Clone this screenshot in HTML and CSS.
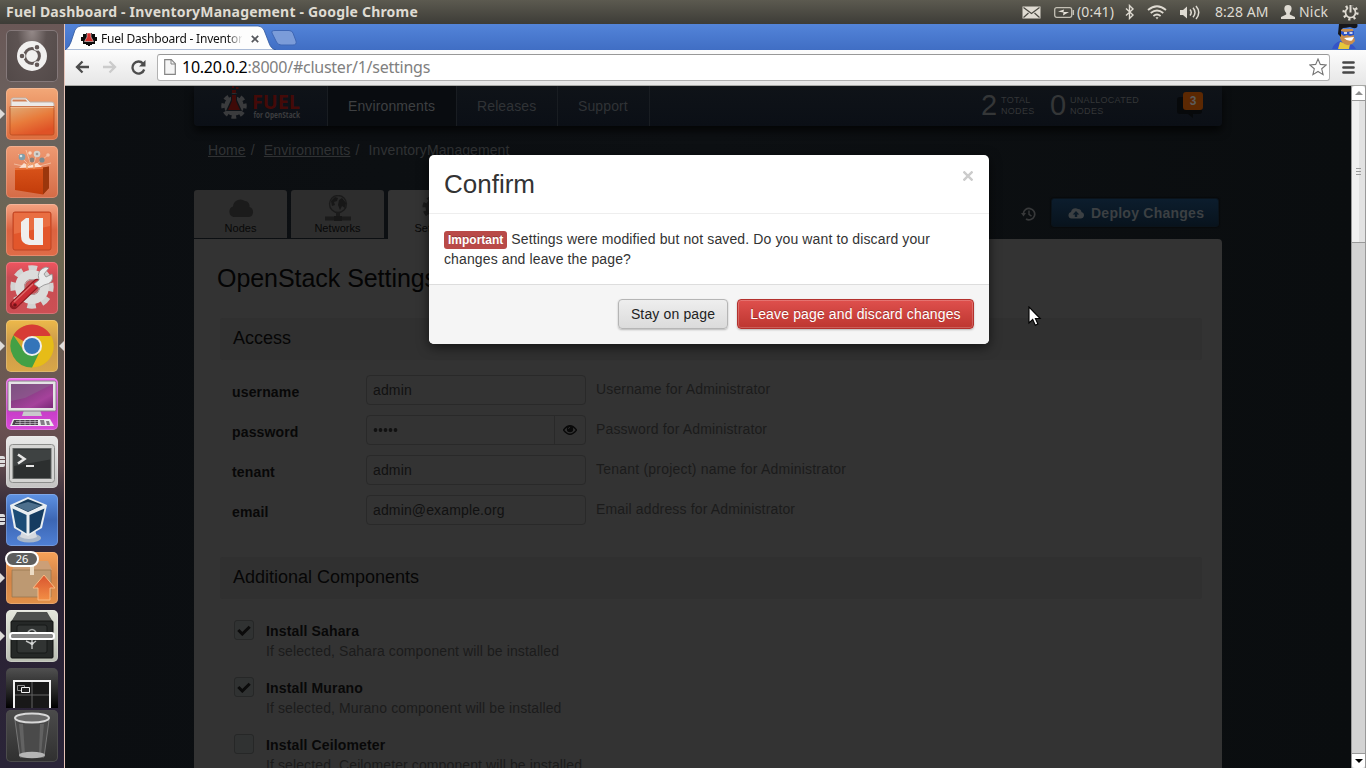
FILE: index.html
```html
<!DOCTYPE html>
<html lang="en">
<head>
<meta charset="utf-8">
<title>Fuel Dashboard - InventoryManagement</title>
<link rel="stylesheet" href="styles.css">
</head>
<body>
<header class="sysbar">
  <div class="sysbar-title">Fuel Dashboard - InventoryManagement - Google Chrome</div>
  <div class="sysbar-status">
    <svg class="s-mail" width="19" height="13" viewBox="0 0 19 13"><rect x="0.5" y="0.5" width="18" height="12" fill="#dfdbd2"/><path d="M1.5 1.5l8 6 8-6M1.5 11.5l5-4.5M17.500 11.500l-5-4.500" stroke="#4a4942" stroke-width="1.200" fill="none"/></svg>
    <svg class="s-batt" width="21" height="11" viewBox="0 0 21 11"><rect x="0.700" y="0.700" width="17" height="9.600" rx="2" fill="none" stroke="#c4c0b5" stroke-width="1.300"/><path d="M19.300 3v5" stroke="#c4c0b5" stroke-width="1.500"/><path d="M4 4.500l6-2-.5 2.500 5.500 0-6 3.500.5-3z" fill="#e6e2d9"/></svg>
    <span class="s-remain">(0:41)</span>
    <svg class="s-bt" width="10" height="16" viewBox="0 0 10 16"><path d="M1 4.500l7 6.500-3.500 3.500v-13L8 5 1 11.500" fill="none" stroke="#dfdbd2" stroke-width="1.400"/></svg>
    <svg class="s-wifi" width="20" height="15" viewBox="0 0 20 15" fill="none" stroke="#dfdbd2" stroke-width="1.700"><path d="M1 5q9-7.500 18 0M3.700 8q6.300-5 12.600 0M6.400 11q3.600-3 7.200 0"/><path d="M8.500 12.300h3L10 14.500z" fill="#dfdbd2" stroke="none"/></svg>
    <svg class="s-snd" width="20" height="15" viewBox="0 0 20 15" fill="none" stroke="#dfdbd2" stroke-width="1.500"><path d="M0 5h3l4-3.500v12L3 10H0z" fill="#dfdbd2" stroke="none"/><path d="M10 4.500q2.500 3 0 6M13 2.800q4 4.700 0 9.400M16 1q5.500 6.500 0 13"/></svg>
    <span class="s-clock">8:28 AM</span>
    <svg class="s-user" width="14" height="14" viewBox="0 0 14 14"><path d="M7 0c4.500 0 4.500 5 1.800 8v1.500L14 12v2H0v-2l5.200-2.500V8C2.500 5 2.500 0 7 0z" fill="#dfdbd2"/></svg>
    <span class="s-name">Nick</span>
    <svg class="s-gear" width="17" height="17" viewBox="0 0 17 17"><circle cx="8.500" cy="8.500" r="6.800" fill="none" stroke="#dfdbd2" stroke-width="2.600" stroke-dasharray="2.200 3.140"/><circle cx="8.500" cy="8.500" r="5" fill="none" stroke="#dfdbd2" stroke-width="1.700"/><path d="M8.500 0v8.500" stroke="#4e4d45" stroke-width="4.500"/><path d="M8.500 1v7.500" stroke="#dfdbd2" stroke-width="2"/></svg>
  </div>
</header>
<div class="desktop">
  <aside class="launcher">
    <div class="tile t-dash"><svg viewBox="0 0 52 52"><circle cx="26" cy="26" r="15" fill="#f1f0ef"/><circle cx="26" cy="26" r="7.400" fill="none" stroke="#625857" stroke-width="3"/><g fill="#625857" stroke="#f1f0ef" stroke-width="1.200"><circle cx="16" cy="26" r="2.900"/><circle cx="31" cy="17.300" r="2.900"/><circle cx="31" cy="34.700" r="2.900"/></g></svg></div>
    <div class="tile t-files run"><svg viewBox="0 0 52 52"><defs><linearGradient id="fo" x1="0" y1="0" x2=".5" y2="1"><stop offset="0" stop-color="#e0ac78"/><stop offset=".55" stop-color="#e87b3b"/><stop offset="1" stop-color="#df5226"/></linearGradient></defs><path d="M5 22V12q0-2 2-2h13l4 4h22q2 0 2 2v6z" fill="#eceae8" stroke="#bdaea5"/><path d="M6.500 11.500h13l2 2h-15z" fill="#cf8058"/><path d="M4 18.500h44V45q0 2-2 2H6q-2 0-2-2z" fill="url(#fo)" stroke="#b84c20" stroke-width=".8"/><path d="M4.500 19.300h43" stroke="#f5c29b"/></svg></div>
    <div class="tile t-soft"><svg viewBox="0 0 52 52"><defs><linearGradient id="bag" x1="0" y1="0" x2="0" y2="1"><stop offset="0" stop-color="#d9531a"/><stop offset="1" stop-color="#c23c0a"/></linearGradient></defs><g stroke="#f8d5be" stroke-width=".8" opacity=".8"><path d="M26 22L12 8M26 22L20 4M26 22L32 5M26 22L42 9M26 22L8 18M26 22L45 17"/></g><circle cx="16" cy="11" r="3.300" fill="#819eaa"/><circle cx="15" cy="10" r="1.300" fill="#d8e4e6"/><circle cx="31" cy="8" r="3.300" fill="#d5d2cd"/><circle cx="31" cy="8" r="1.300" fill="#a09a94"/><circle cx="36" cy="14" r="2.600" fill="#7b8c91"/><circle cx="24" cy="7" r="1.800" fill="#fbd6bd"/><circle cx="26" cy="14" r="2.400" fill="#8a8179"/><circle cx="42" cy="9" r="1.800" fill="#f1c1a8"/><path d="M13 22l5-5 5 3 8-3 5 4z" fill="#fff0e3" opacity=".8"/><path d="M9 22.500l28-1 6-1V42L37 48.500 9 44z" fill="url(#bag)"/><path d="M37 21.500l6-1V42l-6 6.500z" fill="#9b360c"/><path d="M9 22.500l28-1v1.500L9 24z" fill="#e8733b"/><path d="M21 23v-4q0-1.500 1.500-1.500h4Q28 17.500 28 19v3.500" fill="none" stroke="#f0a06a" stroke-width="1.600"/></svg></div>
    <div class="tile t-one"><svg viewBox="0 0 52 52"><rect x="7" y="8" width="38" height="38" rx="2" fill="#e2562b" stroke="#bd4424"/><path d="M8 9h36v13L8 30z" fill="#e96e42"/><path d="M15 18l5-4h3v18q0 4 4 4h1V14h9v27H23q-8-1-8-9z" fill="#efefee"/></svg></div>
    <div class="tile t-set"><svg viewBox="0 0 52 52"><circle cx="26" cy="25" r="18.500" fill="none" stroke="#d3d3d2" stroke-width="6.500" stroke-dasharray="8.200 6.330" transform="rotate(-12 26 25)"/><circle cx="26" cy="25" r="12.500" fill="none" stroke="#dcdcdb" stroke-width="9"/><circle cx="26" cy="25" r="7.500" fill="#c7565b" stroke="#adadac"/><path d="M8 43L31 21" stroke="#8f1a20" stroke-width="8.500" stroke-linecap="round"/><path d="M9 42L31 21" stroke="#c92d35" stroke-width="6" stroke-linecap="round"/><path d="M8 40L27 22" stroke="#df6b6b" stroke-width="1.300"/><circle cx="9" cy="43" r="1.800" fill="#751318"/><path d="M28 22l5-4Q30 8 40 5l3 1-5 6 2 3 6-3q3 9-8 11l-5 3z" fill="#e9eaea" stroke="#8d8d8d" stroke-width=".8"/></svg></div>
    <div class="tile t-chrome run focus"><svg viewBox="0 0 52 52"><circle cx="26" cy="26" r="21.500" fill="#d6a62a"/><path d="M26 26L7.380 15.250A21.500 21.500 0 0 1 44.600 15.250z" fill="#d73c35"/><path d="M26 16H45.200A21.500 21.500 0 0 1 26 47.500L34 31z" fill="#e6bc18"/><path d="M7.380 15.250A21.500 21.500 0 0 0 26 47.500L34 31 18 31z" fill="#42a045"/><circle cx="26" cy="26" r="10" fill="#f0efef"/><circle cx="26" cy="26" r="8" fill="#3475b9"/></svg></div>
    <div class="tile t-desk"><svg viewBox="0 0 52 52"><defs><linearGradient id="dk" x1="0" y1="0" x2="1" y2="1"><stop offset="0" stop-color="#68386c"/><stop offset=".7" stop-color="#a5429b"/><stop offset="1" stop-color="#7a2878"/></linearGradient></defs><path d="M18 32h16l2 6H16z" fill="#c9c8cc"/><rect x="2" y="3" width="48" height="30" rx="1.500" fill="#e4e3e5" stroke="#888289"/><rect x="5" y="6" width="42" height="24" fill="url(#dk)"/><path d="M5 6h42l-28 14-14 3z" fill="#8b628e" opacity=".6"/><path d="M7 41h37l4 7H4z" fill="#ececed"/><path d="M8 42h24v5H6z" fill="#4b424c"/><path d="M10 43.500h22M9 45.500h23M14 42v5M19 42v5M24 42v5M29 42v5" stroke="#d9d4db" stroke-width=".6"/><path d="M34 42h4l1 5h-4zM40 43l3 0 1 4h-3z" fill="#837d85"/></svg></div>
    <div class="tile t-term multi"><svg viewBox="0 0 52 52"><rect x="3.500" y="8.500" width="45" height="38" rx="3" fill="#d4d4d2" stroke="#8d8e8c"/><rect x="7" y="12.500" width="38" height="30" fill="#2c2f2f" stroke="#636665"/><path d="M8 13.500h36v10L8 30z" fill="#434747" opacity=".8"/><path d="M12 18.500l6.500 4.500-6.500 4.500" fill="none" stroke="#e6e6e5" stroke-width="2.600"/><path d="M20 30h8" stroke="#e6e6e5" stroke-width="2"/></svg></div>
    <div class="tile t-vbox multi"><svg viewBox="0 0 52 52"><ellipse cx="23" cy="44" rx="12" ry="4.500" fill="#a8b6c8"/><path d="M16 36h13l2 7q-8 4-17 0z" fill="#d5d9df"/><path d="M4 11L22 3l19 8-5 23-14 8-14-8z" fill="#e9eef1"/><path d="M8 11.500L22 5l15 6-15 7z" fill="#173a58"/><path d="M6.500 14.500L20.500 21v18.500L10 33z" fill="#1c4c75"/><path d="M38.500 14.500L23.500 21v18.500L34 33z" fill="#153c60"/><path d="M9 11.500L22 8l13 3.500-13 6z" fill="#4d6f8c"/></svg></div>
    <div class="tile t-upd run"><svg viewBox="0 0 52 52"><path d="M10 9h32l4 9H6z" fill="#cc9f77"/><path d="M6 18h39v27H6z" fill="#bd9972" stroke="#99764f" stroke-width=".8"/><path d="M24 13h4v10h-4z" fill="#ecdcc5"/><defs><linearGradient id="up" x1="0" y1="0" x2="0" y2="1"><stop offset="0" stop-color="#d9542f"/><stop offset="1" stop-color="#f28e45"/></linearGradient></defs><path d="M38 23L49 36h-5v12H32V36h-5z" fill="url(#up)" stroke="#f9bb83"/></svg><span class="count">26</span></div>
    <div class="tile t-safe run"><svg viewBox="0 0 52 52"><path d="M11 2h30l6 10H5z" fill="#4d504d"/><rect x="5" y="11" width="42" height="37" rx="1" fill="#252827" stroke="#121313"/><rect x="11" y="15" width="30" height="28" rx="2" fill="#313433" stroke="#171818"/><path d="M22 22q4-5 8 0" fill="none" stroke="#a8abaa" stroke-width="1.500"/><path d="M26 30v9M26 34l-6-3M26 34l4-3" stroke="#c3c5c4" stroke-width="1.400"/><circle cx="26" cy="33.500" r="1.600" fill="#d8dad9"/><rect x="4" y="23" width="44" height="6" rx="2.500" fill="#858585" stroke="#fff" stroke-width="2"/></svg></div>
    <div class="tile t-work"><svg viewBox="0 0 52 40"><rect x="8" y="13" width="36" height="38" fill="#181818" stroke="#f1f1f1" stroke-width="2"/><path d="M26 14v26M9 27h34" stroke="#626262"/><path d="M11.500 17.500h7v5h-7z" fill="none" stroke="#8e8e8e"/><path d="M15.500 19.500h8v5h-8z" fill="#222" stroke="#f1f1f1"/></svg></div>
    <div class="tile t-trash"><svg viewBox="0 0 52 52"><path d="M9 10h34l-5 37H14z" fill="#4a4a4a" stroke="#757575"/><path d="M13 14h4l2 31h-3zM34 14h4l-3 31h-2z" fill="#626262"/><ellipse cx="26" cy="8" rx="17" ry="4.500" fill="#696969" stroke="#d8d8d8" stroke-width="2"/><ellipse cx="26" cy="45" rx="13" ry="3.200" fill="#b5b5b5"/></svg></div>
  </aside>
  <main class="browser">
    <div class="tabstrip">
      <svg class="tabshape" width="250" height="26" viewBox="0 0 250 26"><path d="M0 26Q4 24 6 18L10 6Q12 2 16 2H193Q197 2 199 6L204 19Q206 25 211 26z" fill="#fdfdfd" stroke="#2f559b" stroke-width=".8"/><path d="M210 6.500H224Q227 6.500 228 9L231 17Q232 21 228 21H216Q213 21 211.500 18L207 9Q206 6.500 210 6.500z" fill="#7b9cd9" stroke="#3e66b4"/></svg>
      <div class="tab">
        <svg class="favicon" width="16" height="16" viewBox="0 0 16 16"><path d="M2 3h3v-1h6v1h3v3h2v4h-2v3h-3v1H9v1H7v-1H5v-1H2v-3H0V6h2z" fill="#0b0b0b"/><path d="M6 2h4v4l2.500 4.500h-9L6 6z" fill="#d4312e" stroke="#fff" stroke-width=".5"/></svg>
        <span class="tab-title">Fuel Dashboard - InventoryManagement</span>
        <svg class="tab-x" width="8" height="8" viewBox="0 0 8 8"><path d="M.8.800l6.400 6.400M7.200.800L.8 7.200" stroke="#55575c" stroke-width="1.700"/></svg>
      </div>
      <svg class="avatar" width="26" height="25" viewBox="0 0 26 25"><path d="M0 25Q2 19 8 17l9 2q5 2 7 6z" fill="#3454c8"/><path d="M6 25l2-7 10 2-1 5z" fill="#e6c73b"/><path d="M8 5h13l1 8 1 4-3 3q-6 3-10-2L8 14z" fill="#c98d4c"/><path d="M7 0h13l5-1q2 6-4 5l-3-1q-4 1-7 1l-2 2v7l-3-3z" fill="#16161a"/><path d="M9 7l4 1 9-1v4l-4 1-3-1-3 1-3-2z" fill="#2a52c9"/><path d="M12 9h3M17.500 9h3" stroke="#fff" stroke-width="1.300"/><path d="M12 14l10-1-2 3.500q-5 1-8-2.500z" fill="#fff"/></svg>
    </div>
    <div class="toolbar">
      <svg class="nav-b" width="14" height="14" viewBox="0 0 14 14"><path d="M14 7H2.500M7.500 1.500L2 7l5.500 5.500" fill="none" stroke="#4c4c4c" stroke-width="2.300"/></svg>
      <svg class="nav-f" width="14" height="14" viewBox="0 0 14 14"><path d="M0 7h11.500M6.500 1.500L12 7l-5.500 5.500" fill="none" stroke="#cbcbcb" stroke-width="2.300"/></svg>
      <svg class="nav-r" width="15" height="15" viewBox="0 0 15 15"><path d="M12 3.500A6 6 0 1 0 13.200 9.500" fill="none" stroke="#4c4c4c" stroke-width="2.300"/><path d="M14.500 0v6.500H8z" fill="#4c4c4c"/></svg>
      <div class="omnibox">
        <svg width="12" height="16" viewBox="0 0 12 16"><path d="M.7.700h6.600l4 4v10.600H.7z" fill="#f5f5f5" stroke="#858585" stroke-width="1.200"/><path d="M7 .7v4.300h4.300" fill="none" stroke="#858585"/></svg>
        <span class="url"><b>10.20.0.2</b>:8000/#cluster/1/settings</span>
        <svg class="star" width="18" height="18" viewBox="0 0 18 18"><path d="M9 1l2.300 5.400 5.900.500-4.500 3.900 1.400 5.800L9 13.500l-5.100 3.100 1.400-5.800L.8 6.900l5.900-.5z" fill="#fff" stroke="#747474" stroke-width="1.100"/></svg>
      </div>
      <svg class="menu" width="13" height="13" viewBox="0 0 13 13"><path d="M1.500 1.500h10M1.500 6.500h10M1.500 11.500h10" stroke="#474747" stroke-width="2.700" stroke-linecap="round"/></svg>
    </div>
    <div class="viewport">
      <div class="page">
        <div class="container">
          <nav class="navbar">
            <div class="brand"><svg width="84" height="36" viewBox="0 0 84 36">
              <circle cx="14" cy="20" r="10.500" fill="none" stroke="#3a3b3d" stroke-width="4.500" stroke-dasharray="4.500 3.747" transform="rotate(-12 14 20)"/><circle cx="14" cy="20" r="9.800" fill="#3a3b3d"/><path d="M11 8h6v6l5 11H6l5-11z" fill="#0f1318"/><path d="M12 9h4v6l4 9H8l4-9z" fill="#3f0a08"/><path d="M12 4h4v3h-4zM16 1h2.500v2H16zM12 0h2v2h-2z" fill="#3f0a08"/>
              <text class="fuel" x="32" y="23" textLength="48" lengthAdjust="spacingAndGlyphs">FUEL</text><text class="fuel-sub" x="33.500" y="32" textLength="46.500" lengthAdjust="spacingAndGlyphs">for OpenStack</text></svg></div>
            <a class="nav-item n-env">Environments</a><a class="nav-item n-rel">Releases</a><a class="nav-item n-sup">Support</a>
            <div class="stats"><span class="big">2</span><span class="cap cap-a">TOTAL<br>NODES</span><span class="big">0</span><span class="cap cap-b">UNALLOCATED<br>NODES</span><span class="bubble"><svg width="26" height="22" viewBox="0 0 26 22"><path d="M3 0h19q3 0 3 3v11q0 3-3 3h-6v4l-5-4H3q-3 0-3-3V3q0-3 3-3z" fill="#07090b"/></svg><span class="badge">3</span></span></div>
          </nav>
          <div class="crumbs"><u>Home</u><i>/</i><u>Environments</u><i>/</i><span>InventoryManagement</span></div>
          <div class="tabrow">
            <div class="ctab"><svg width="26" height="26" viewBox="0 0 26 26"><path d="M5.500 22a5.500 5.500 0 0 1-.5-10.500A7.500 7.500 0 0 1 17 6a5 5 0 0 1 4.500 6A5.200 5.200 0 0 1 21 22z" fill="#1b1b1b"/></svg>Nodes</div>
            <div class="ctab"><svg width="26" height="26" viewBox="0 0 26 26"><circle cx="13" cy="9" r="8.500" fill="#2a2a2a" stroke="#1b1b1b" stroke-width="1.300"/><path d="M6 6l4-4 3 1-1 3-3 1 1 3-3 1zM14 5l3-2 4 5-1 5-3-2-2 4-2-5z" fill="#171717"/><path d="M13 18v4M0 23.500h26" stroke="#1b1b1b" stroke-width="4"/><path d="M9 23.500h8" stroke="#171717" stroke-width="5"/></svg>Networks</div>
            <div class="ctab on"><svg width="26" height="26" viewBox="0 0 26 26"><circle cx="13" cy="12.500" r="10" fill="none" stroke="#1b1b1b" stroke-width="5" stroke-dasharray="4.300 3.554"/><circle cx="13" cy="12.500" r="7" fill="none" stroke="#1b1b1b" stroke-width="5"/></svg>Settings</div>
            <div class="actions">
              <svg class="hist" width="15" height="14" viewBox="0 0 15 14"><path d="M2.300 7A5.700 5.700 0 1 1 5 12" fill="none" stroke="#38393a" stroke-width="1.700"/><path d="M0 6h5L2.500 9.500z" fill="#38393a"/><path d="M8 3.500V7.300l2.500 1.800" fill="none" stroke="#38393a" stroke-width="1.400"/></svg>
              <div class="deploy"><svg width="16" height="12" viewBox="0 0 16 12"><path d="M3.500 11.500A3.300 3.300 0 0 1 3 5 4.500 4.500 0 0 1 10 2a3.500 3.500 0 0 1 3.500 3 3.300 3.300 0 0 1-.8 6.500z" fill="#3c4043"/><path d="M8 4l3.300 3.500H9.200V10H6.800V7.500H4.700z" fill="#0b1a27"/></svg>Deploy Changes</div>
            </div>
          </div>
          <section class="panel">
            <h2>OpenStack Settings</h2>
            <div class="legend">Access</div>
            <div class="rows">
              <div class="row"><b>username</b><div class="input">admin</div><span class="hint">Username for Administrator</span></div>
              <div class="row"><b>password</b><div class="input"><span class="dots"></span><span class="eye"><svg width="14" height="10" viewBox="0 0 14 10"><path d="M.5 5Q7-3.500 13.500 5 7 13.500.5 5z" fill="none" stroke="#090909" stroke-width="1.300"/><circle cx="7" cy="4" r="3.200" fill="#090909"/><path d="M5.500 4A1.700 1.700 0 0 1 7 2.300" fill="none" stroke="#333" stroke-width=".8"/></svg></span></div><span class="hint">Password for Administrator</span></div>
              <div class="row"><b>tenant</b><div class="input">admin</div><span class="hint wide">Tenant (project) name for Administrator</span></div>
              <div class="row"><b>email</b><div class="input">admin@example.org</div><span class="hint">Email address for Administrator</span></div>
            </div>
            <div class="legend">Additional Components</div>
            <div class="checks">
              <div class="check"><span class="box"><svg width="14" height="11" viewBox="0 0 14 11"><path d="M1.300 5l4 4L12.700 1.700" fill="none" stroke="#0b0b0b" stroke-width="3"/></svg></span><div><b>Install Sahara</b><p>If selected, Sahara component will be installed</p></div></div>
              <div class="check"><span class="box"><svg width="14" height="11" viewBox="0 0 14 11"><path d="M1.300 5l4 4L12.700 1.700" fill="none" stroke="#0b0b0b" stroke-width="3"/></svg></span><div><b>Install Murano</b><p>If selected, Murano component will be installed</p></div></div>
              <div class="check"><span class="box"></span><div><b>Install Ceilometer</b><p>If selected, Ceilometer component will be installed</p></div></div>
            </div>
          </section>
        </div>
        <div class="modal">
          <div class="modal-head"><h3>Confirm</h3><svg width="10" height="10" viewBox="0 0 10 10"><path d="M.5.500l9 9M9.500.500l-9 9" stroke="#ccc" stroke-width="2.400"/></svg></div>
          <div class="modal-body"><span class="label">Important</span> Settings were modified but not saved. Do you want to discard your changes and leave the page?</div>
          <div class="modal-foot"><button class="btn">Stay on page</button><button class="btn danger">Leave page and discard changes</button></div>
        </div>
        <svg class="cursor" width="14" height="21" viewBox="0 0 14 21"><path d="M1 1v16l3.700-3.500 2.600 5.700 2.600-1.200-2.500-5.500h4.800z" fill="#fff" stroke="#000" stroke-width="1.100"/></svg>
      </div>
      <div class="scrollbar">
        <div class="sb-btn"><svg width="8" height="4"><path d="M0 4L4 0l4 4z" fill="#8e8e8e"/></svg></div>
        <div class="thumb"><svg width="5" height="8"><path d="M0 .5h5M0 3.500h5M0 6.500h5" stroke="#9a9a9a"/></svg></div>
        <div class="track"></div>
        <div class="sb-btn last"><svg width="8" height="4"><path d="M0 0h8L4 4z" fill="#000"/></svg></div>
      </div>
    </div>
  </main>
</div>
</body>
</html>
```
FILE: styles.css
```css
* { box-sizing: border-box; }
body { margin: 0; width: 1366px; height: 768px; overflow: hidden; font: 14px/20px "Liberation Sans", Arial, sans-serif; background: #0b0d0f; }
svg { display: block; flex: none; }
h2, h3, p { margin: 0; font-weight: normal; }

.sysbar { display: flex; justify-content: space-between; height: 24px; background: linear-gradient(#5c5a50, #3d3c37); color: #dfdbd2; font-family: "Noto Sans", sans-serif; align-items: center; }
.sysbar-title { padding-left: 6px; font-weight: 700; font-size: 14px; letter-spacing: .19px; white-space: nowrap; }
.sysbar-status { display: flex; align-items: center; width: 344px; height: 24px; font-size: 14px; white-space: nowrap; }
.s-batt { margin-left: 13px; }
.s-remain { width: 49px; padding-left: 2px; letter-spacing: .15px; }
.s-bt { margin-left: 1px; }
.s-wifi { margin-left: 12px; }
.s-snd { margin-left: 13px; }
.s-clock { box-sizing: content-box; width: 51px; padding-left: 15px; letter-spacing: .05px; }
.s-user { margin-left: 15px; }
.s-name { padding-left: 4px; width: 47px; letter-spacing: .2px; }

.desktop { display: flex; height: 744px; }
.launcher { width: 65px; padding: 6px 6px 0; border-right: 1px solid #e6c4b8; background: linear-gradient(#6a5857 0, #6a625e 100px, #6d6750 235px, #675e50 300px, #6f5654 380px, #5f494c 440px, #382e3b 480px, #2b2233 560px, #2a2438); display: flex; flex-direction: column; gap: 6px; }
.tile { position: relative; flex: none; width: 52px; height: 52px; border-radius: 5px; box-shadow: inset 0 0 0 1px rgba(255,255,255,.2); }
.tile svg { width: 52px; height: 100%; }
.t-dash { background: radial-gradient(ellipse at 50% 0, #968b8a, #5d5352 40%, #524948); box-shadow: inset 0 0 0 1px #85797a; }
.t-files { background: linear-gradient(#f2a878, #dd6c3d); }
.t-soft { background: linear-gradient(#ef9a72, #d56b46); }
.t-one { background: linear-gradient(#f4a381, #dc6340 50%, #e06c48); }
.t-set { background: linear-gradient(#f05560, #c74d53 30%, #cd4f54); }
.t-chrome { background: linear-gradient(#edb94a, #cb9a4a 45%, #d9a748); }
.t-desk { background: linear-gradient(#f26bf0, #c63cc6 60%, #d84bd9); }
.t-term { background: linear-gradient(#e9e9e8, #c4c3c2); }
.t-vbox { background: linear-gradient(#5f93e4, #3c66b3 50%, #4f80d5); }
.t-upd { background: linear-gradient(#f7a258, #d38448 50%, #e29048); }
.t-safe { background: linear-gradient(#e4e7dc, #b9bdb2); }
.t-work { height: 40px; border-radius: 5px 5px 0 0; background: linear-gradient(#505050, #232323 60%, #000); margin-bottom: -4px; box-shadow: none; }
.t-trash { background: linear-gradient(#4b4b4b, #303030); box-shadow: inset 0 0 0 1px #4c4c4c; }
.run::before { content: ""; position: absolute; left: -6px; top: 21px; border: 5px solid transparent; border-left-color: #dedbd9; border-right: 0; }
.focus::after { content: ""; position: absolute; right: -6px; top: 21px; border: 5px solid transparent; border-right-color: #dedbd9; border-left: 0; }
.multi::before { content: ""; position: absolute; left: -6px; top: 20px; width: 5px; height: 11px; background: linear-gradient(#ddd 3px, transparent 3px 4px, #ddd 4px 7px, transparent 7px 8px, #ddd 8px); border-radius: 0 2px 2px 0; }
.count { position: absolute; left: -1px; top: -1px; width: 34px; height: 16px; border: 2px solid #fff; border-radius: 8px; background: #5d5d5d; color: #fff; font: 11px/12px "Noto Sans", sans-serif; text-align: center; }

.browser { width: 1301px; display: flex; flex-direction: column; }
.tabstrip { position: relative; height: 26px; background: linear-gradient(#5384d9, #406ec4); display: flex; justify-content: space-between; }
.tabshape { position: absolute; left: 0; top: 0; }
.tab { position: relative; display: flex; align-items: center; padding: 4px 0 0 16px; height: 26px; }
.tab-title { width: 141px; margin: 0 9px 0 4px; overflow: hidden; white-space: nowrap; font: 12px/18px "Noto Sans", sans-serif; color: #111; letter-spacing: -.22px; -webkit-mask-image: linear-gradient(90deg, #000 126px, transparent 142px); }
.avatar { margin-right: 8px; }
.toolbar { height: 36px; background: linear-gradient(#fcfcfc, #e6e6e6); border-bottom: 1px solid #a9aaa7; display: flex; align-items: center; padding: 0 0 1px 10px; }
.nav-f { margin-left: 14px; }
.nav-r { margin-left: 14px; }
.omnibox { width: 1173px; height: 27px; margin-left: 11px; margin-right: 12px; background: #fff; border: 1px solid #b1b1b1; border-top-color: #989898; border-radius: 3px; display: flex; align-items: center; padding-left: 6px; }
.url { flex: 1; padding-left: 6px; font: 16px/24px "Noto Sans", sans-serif; color: #808080; letter-spacing: -.25px; }
.url b { color: #000; font-weight: normal; }
.star { margin-right: 2px; }

.viewport { flex: 1; display: flex; min-height: 0; }
.page { position: relative; width: 1286px; height: 682px; overflow: hidden; background: linear-gradient(90deg, #0b0e11, #0d1013 50%, #0a0d0f); padding-left: 129px; }
.container { width: 1028px; }
.navbar { display: flex; height: 40px; border-radius: 0 0 4px 4px; background: linear-gradient(#0f1318, #0b0f16); box-shadow: 0 5px 8px rgba(0,0,0,.7); }
.brand { width: 133px; padding-left: 26px; }
.fuel { font: 700 19px "Open Sans", sans-serif; fill: #440a08; }
.fuel-sub { font: 700 9px "Open Sans", sans-serif; fill: #3c3d3f; }
.nav-item { border-left: 1px solid #191d22; color: #303336; line-height: 40px; padding-left: 20px; letter-spacing: .12px; }
.n-env { width: 129px; background: #090c10; color: #3e4042; }
.n-rel { width: 101px; }
.n-sup { width: 92px; }
.stats { flex: 1; display: flex; align-items: center; border-left: 1px solid #191d22; padding-left: 331px; color: #343637; }
.big { font-size: 29px; line-height: 38px; width: 20px; margin-top: -3px; }
.cap { font-size: 9px; line-height: 11px; letter-spacing: .3px; }
.cap-a { width: 49px; }
.cap-b { width: 107px; }
.bubble { position: relative; margin-top: 3px; }
.badge { position: absolute; left: 6px; top: -5px; width: 20px; height: 18px; border-radius: 3px; background: #5c2802; color: #5c5c5c; font: bold 12px/18px "Liberation Sans", sans-serif; text-align: center; }
.crumbs { display: flex; padding: 14px 0 0 14px; height: 64px; color: #303234; letter-spacing: .08px; }
.crumbs i { font-style: normal; width: 18.200px; padding-left: 5px; }
.tabrow { display: flex; gap: 4px; height: 49px; border-bottom: 1px solid transparent; }
.ctab { width: 93px; height: 48px; background: #2d2d2d; border-radius: 3px 3px 0 0; padding-top: 5px; display: flex; flex-direction: column; align-items: center; font-size: 11px; line-height: 15px; color: #080808; letter-spacing: .05px; }
.ctab.on { background: #333; height: 49px; }
.actions { flex: 1; display: flex; justify-content: flex-end; padding: 8px 3px 0 0; }
.hist { margin: 9px 15px 0 0; }
.deploy { width: 168px; height: 29px; border-radius: 3px; border: 1px solid #0a131b; background: linear-gradient(#0c1d2d, #08131d); box-shadow: 0 0 2px #000; display: flex; align-items: center; padding-left: 16px; gap: 7px; color: #3c4043; font-weight: bold; letter-spacing: .25px; }
.panel { background: #333; height: 540px; border-radius: 0 4px 0 0; padding: 24px 20px 0 26px; }
.panel h2 { font-size: 25px; line-height: 30px; margin: 0 0 25px -3px; color: #040404; letter-spacing: -.05px; }
.legend { height: 42px; border-radius: 3px; background: #303030; padding-left: 13px; font-size: 18px; line-height: 40px; color: #060606; }
.rows { padding: 15px 0 0 12px; height: 197px; display: flex; flex-direction: column; gap: 10px; }
.row { display: flex; height: 30px; }
.row b { width: 134px; line-height: 34px; color: #080808; letter-spacing: .15px; }
.input { width: 220px; border: 1px solid #292929; border-radius: 4px; padding-left: 6px; line-height: 28px; color: #111; letter-spacing: .14px; display: flex; justify-content: space-between; }
.hint { margin-left: 10px; line-height: 28px; color: #1b1b1b; letter-spacing: .15px; }
.hint.wide { letter-spacing: .21px; }
.eye { width: 31px; border-left: 1px solid #292929; display: flex; align-items: center; justify-content: center; }
.dots { width: 25px; background: radial-gradient(circle at 2.500px 14px, #111 1.600px, transparent 2.200px) 0 0 / 5px 28px repeat-x; }
.checks { padding: 21px 0 0 14px; }
.check { display: flex; gap: 12px; height: 57px; color: #1b1b1b; }
.check b { display: block; color: #080808; margin-top: 1px; letter-spacing: .15px; }
.check p { line-height: 20px; letter-spacing: .11px; }
.box { width: 20px; height: 20px; border: 1px solid #262727; border-radius: 3px; background: #303232; display: flex; align-items: center; justify-content: center; }

.modal { position: absolute; left: 364px; top: 69px; width: 560px; height: 189px; background: #fff; border-radius: 5px; overflow: hidden; box-shadow: 0 3px 12px rgba(0,0,0,.6); color: #333; }
.modal-head { height: 59px; border-bottom: 1px solid #eee; padding: 14px 16px 0 15px; display: flex; justify-content: space-between; }
.modal-head h3 { font-size: 26px; line-height: 30px; }
.modal-head svg { margin-top: 2px; }
.modal-body { height: 70px; padding: 15px 40px 0 15px; letter-spacing: .12px; }
.label { display: inline-block; height: 18px; padding: 0 4px; background: #b94a48; color: #fff; border-radius: 3px; font: bold 12px/18px "Liberation Sans", sans-serif; vertical-align: 0; text-shadow: 0 -1px 0 rgba(0,0,0,.25); letter-spacing: 0; }
.modal-foot { height: 60px; background: #f5f5f5; border-top: 1px solid #ddd; padding: 14px 15px 0; display: flex; justify-content: flex-end; gap: 9px; }
.btn { height: 30px; width: 110px; padding: 0; border: 1px solid #b5b5b5; border-radius: 4px; background: linear-gradient(#eee, #dbdbdb); font: 14px/20px "Liberation Sans", sans-serif; color: #222; letter-spacing: .14px; box-shadow: 0 1px 2px rgba(0,0,0,.25); white-space: nowrap; }
.danger { width: 237px; color: #fff; background: linear-gradient(#df504d, #bd3630); border-color: #b3312d; box-shadow: inset 0 0 0 1px rgba(255,255,255,.2), 0 1px 2px rgba(0,0,0,.25); text-shadow: 0 -1px 0 rgba(0,0,0,.25); }
.cursor { position: absolute; left: 963px; top: 220px; }

.scrollbar { width: 15px; display: flex; flex-direction: column; border-left: 1px solid #999; border-right: 1px solid #999; background: #d3d3d3; }
.sb-btn { height: 15px; flex: none; background: #fff; border-radius: 3px 3px 0 0; display: flex; align-items: center; justify-content: center; border-bottom: 1px solid #999; }
.last { border-bottom: 0; border-top: 1px solid #999; border-radius: 0 0 3px 3px; }
.thumb { height: 142px; flex: none; border-bottom: 1px solid #999; background: linear-gradient(90deg, #f0f0f0 7px, #e2e2e2 7px); display: flex; align-items: center; justify-content: center; }
.track { flex: 1; }
```
